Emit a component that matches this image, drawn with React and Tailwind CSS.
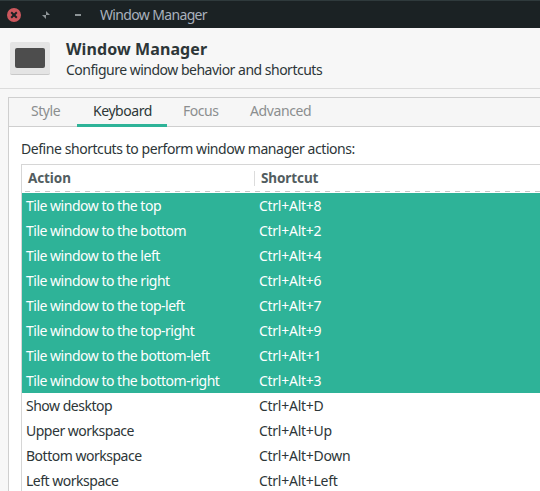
const rows = [
  ['Tile window to the top', 'Ctrl+Alt+8', true],
  ['Tile window to the bottom', 'Ctrl+Alt+2', true],
  ['Tile window to the left', 'Ctrl+Alt+4', true],
  ['Tile window to the right', 'Ctrl+Alt+6', true],
  ['Tile window to the top-left', 'Ctrl+Alt+7', true],
  ['Tile window to the top-right', 'Ctrl+Alt+9', true],
  ['Tile window to the bottom-left', 'Ctrl+Alt+1', true],
  ['Tile window to the bottom-right', 'Ctrl+Alt+3', true],
  ['Show desktop', 'Ctrl+Alt+D', false],
  ['Upper workspace', 'Ctrl+Alt+Up', false],
  ['Bottom workspace', 'Ctrl+Alt+Down', false],
  ['Left workspace', 'Ctrl+Alt+Left', false],
];

function TitleBar() {
  return (
    <div className="flex h-7 shrink-0 items-center border-t border-[#2f3a3c] bg-[#1b2224] text-[#a9b1bd]">
      <svg className="ml-[7px] size-[14px]" viewBox="0 0 14 14">
        <circle cx="7" cy="7" r="7" fill="#cc575d" />
        <path d="M4.2 4.2 9.8 9.8M9.8 4.2 4.2 9.8" stroke="#1b2224" strokeWidth="2" />
      </svg>
      <svg className="ml-[21px] size-2" viewBox="0 0 8 8" fill="#8d9496">
        <path d="M4 0 8 4H4zM0 4H4V8z" />
      </svg>
      <div className="ml-[25px] h-[2px] w-[6px] bg-[#8d9496]" />
      <span className="ml-[19px] pt-px leading-[20px] tracking-[-0.65px]">Window Manager</span>
    </div>
  );
}

function Header() {
  return (
    <header className="flex h-[61px] shrink-0 border-b border-[#dcdcdc] pl-[10px]">
      <div className="mt-[14px] flex h-[33px] w-10 justify-center rounded-[2px] border-b border-[#c9c9c9] bg-[#e4e4e4] pt-[6px]">
        <div className="h-5 w-[30px] rounded-[2px] bg-[#4d4d4d]" />
      </div>
      <div className="ml-4 pt-[11px]">
        <h1 className="text-[16px] leading-[21px] font-bold tracking-[0.1px]">Window Manager</h1>
        <p className="leading-[20px] tracking-[-0.5px]">Configure window behavior and shortcuts</p>
      </div>
    </header>
  );
}

function Tabs() {
  return (
    <nav className="flex h-[29px] shrink-0 border-b border-[#cfcfcf] bg-[#f6f6f6] pl-[6px] tracking-[-0.45px] text-[#8b8e8f]">
      <span className="w-[62px] pl-4 leading-[25px]">Style</span>
      <span className="h-[29px] w-[90px] border-b-[3px] border-[#2eb398] pl-4 leading-[25px] text-[#2d3638]">Keyboard</span>
      <span className="w-[67px] pl-4 leading-[25px]">Focus</span>
      <span className="pl-4 leading-[25px] tracking-[-0.4px]">Advanced</span>
    </nav>
  );
}

function ShortcutTable() {
  return (
    <div className="flex flex-1 flex-col border-t border-l border-[#d6d6d6]">
      <div className="flex h-[26px] shrink-0 items-center text-[13.5px] font-bold tracking-[-0.1px] text-[#525d60]">
        <span className="w-[232px] pt-px pl-[6px]">Action</span>
        <span className="h-[15px] border-l border-[#dcdcdc]" />
        <span className="pt-px pl-[6px]">Shortcut</span>
      </div>
      <div className="ml-[3px] h-px shrink-0 bg-[repeating-linear-gradient(90deg,#c8c8c8_0_5px,transparent_5px_10px)]" />
      <div className="h-px shrink-0" />
      {rows.map(([action, shortcut, selected]) => (
        <div
          key={action}
          className={selected ? 'flex h-[25px] shrink-0 bg-[#2eb398] leading-[26px] text-white' : 'flex h-[25px] shrink-0 leading-[26px]'}
        >
          <span className="w-[233px] pl-1 tracking-[-0.49px]">{action}</span>
          <span className="pl-1 tracking-[-0.27px]">{shortcut}</span>
        </div>
      ))}
    </div>
  );
}

export default function App() {
  return (
    <div className="flex h-[491px] w-[540px] flex-col overflow-hidden bg-[#f7f7f7] font-['Noto_Sans',sans-serif] text-[14px] whitespace-nowrap text-[#2d3638]">
      <TitleBar />
      <Header />
      <main className="mt-2 ml-2 flex min-h-0 flex-1 flex-col border-t border-l border-[#cfcfcf] bg-white">
        <Tabs />
        <div className="flex min-h-0 flex-1 flex-col pl-3">
          <p className="h-[37px] shrink-0 pt-3 leading-[20px] tracking-[-0.44px]">Define shortcuts to perform window manager actions:</p>
          <ShortcutTable />
        </div>
      </main>
    </div>
  );
}
